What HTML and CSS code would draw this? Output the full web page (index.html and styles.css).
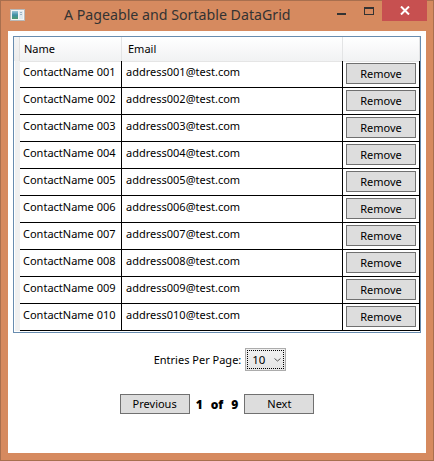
FILE: index.html
```html
<!DOCTYPE html>
<html>
<head>
<meta charset="utf-8">
<link rel="stylesheet" href="styles.css">
</head>
<body>
<div class="window">
  <div class="titlebar">
    <svg class="app-icon" width="15" height="12" viewBox="0 0 15 12">
      <defs>
        <linearGradient id="g" x1="0" y1="0" x2="0" y2="1">
          <stop offset="0" stop-color="#9fc7d8"/>
          <stop offset="0.5" stop-color="#3f8fa6"/>
          <stop offset="1" stop-color="#4f9a6a"/>
        </linearGradient>
      </defs>
      <rect x="0.5" y="0.5" width="14" height="11" fill="#f4f4f4" stroke="#b9b9b9"/>
      <rect x="2" y="2" width="6" height="8" fill="url(#g)"/>
      <rect x="9" y="2" width="4" height="8" fill="#dfe8ee"/>
      <rect x="10" y="3" width="2" height="1" fill="#9db4c4"/>
      <rect x="10" y="5" width="2" height="1" fill="#9db4c4"/>
    </svg>
    <span class="title">A Pageable and Sortable DataGrid</span>
    <span class="spacer"></span>
    <span class="cap-min"></span>
    <span class="cap-max"></span>
    <span class="cap-close">
      <svg width="10" height="9" viewBox="0 0 10 9"><path d="M1 0.5 L9 8.5 M9 0.5 L1 8.5" stroke="#fff" stroke-width="2"/></svg>
    </span>
  </div>
  <div class="client">
    <div class="datagrid">
      <div class="row header">
        <div class="rh"></div>
        <div class="hcell">Name</div>
        <div class="hcell email">Email</div>
        <div class="hcell last"></div>
      </div>
      <div class="row"><div class="rh"></div><div class="cell name">ContactName 001</div><div class="cell email">address001@test.com</div><div class="cell act"><button class="btn remove">Remove</button></div></div>
      <div class="row"><div class="rh"></div><div class="cell name">ContactName 002</div><div class="cell email">address002@test.com</div><div class="cell act"><button class="btn remove">Remove</button></div></div>
      <div class="row"><div class="rh"></div><div class="cell name">ContactName 003</div><div class="cell email">address003@test.com</div><div class="cell act"><button class="btn remove">Remove</button></div></div>
      <div class="row"><div class="rh"></div><div class="cell name">ContactName 004</div><div class="cell email">address004@test.com</div><div class="cell act"><button class="btn remove">Remove</button></div></div>
      <div class="row"><div class="rh"></div><div class="cell name">ContactName 005</div><div class="cell email">address005@test.com</div><div class="cell act"><button class="btn remove">Remove</button></div></div>
      <div class="row"><div class="rh"></div><div class="cell name">ContactName 006</div><div class="cell email">address006@test.com</div><div class="cell act"><button class="btn remove">Remove</button></div></div>
      <div class="row"><div class="rh"></div><div class="cell name">ContactName 007</div><div class="cell email">address007@test.com</div><div class="cell act"><button class="btn remove">Remove</button></div></div>
      <div class="row"><div class="rh"></div><div class="cell name">ContactName 008</div><div class="cell email">address008@test.com</div><div class="cell act"><button class="btn remove">Remove</button></div></div>
      <div class="row"><div class="rh"></div><div class="cell name">ContactName 009</div><div class="cell email">address009@test.com</div><div class="cell act"><button class="btn remove">Remove</button></div></div>
      <div class="row"><div class="rh"></div><div class="cell name">ContactName 010</div><div class="cell email">address010@test.com</div><div class="cell act"><button class="btn remove">Remove</button></div></div>
    </div>
    <div class="entries">
      <span class="entries-label">Entries Per Page:</span>
      <span class="combo">
        <span class="combo-focus">
          <span class="combo-value">10</span>
          <svg class="chev" width="7" height="4" viewBox="0 0 7 4"><path d="M0.5 0.5 L3.5 3 L6.5 0.5" fill="none" stroke="#555" stroke-width="1"/></svg>
        </span>
      </span>
    </div>
    <div class="pager">
      <button class="btn nav">Previous</button>
      <span class="pageinfo"><b>1</b><b>of</b><b>9</b></span>
      <button class="btn nav">Next</button>
    </div>
  </div>
</div>
</body>
</html>
```

FILE: styles.css
```css
html, body {
  margin: 0;
  padding: 0;
}
body {
  background: #d68a5f;
  font-family: "Noto Sans", "Open Sans", sans-serif;
  font-size: 11px;
  color: #000;
}
.window {
  width: 434px;
  height: 461px;
  box-sizing: border-box;
  border: 1px solid #a86f4e;
  padding: 0 7px 7px;
  display: flex;
  flex-direction: column;
  background: #d68a5f;
}
.titlebar {
  height: 30px;
  flex-shrink: 0;
  display: flex;
  align-items: flex-start;
}
.app-icon {
  margin: 8px 0 0 2px;
  flex-shrink: 0;
}
.title {
  margin: 4px 0 0 39px;
  font-size: 14.2px;
  line-height: 20px;
  color: #333;
  white-space: nowrap;
}
.spacer {
  flex: 1;
}
.cap-min {
  width: 9px;
  height: 2px;
  margin-top: 12px;
  background: #333;
}
.cap-max {
  width: 10px;
  height: 8px;
  box-sizing: border-box;
  margin: 6px 0 0 18px;
  border: 1px solid #333;
  border-top-width: 2px;
}
.cap-close {
  width: 45px;
  height: 21px;
  margin: -1px -1px 0 8px;
  background: #c75050;
  display: flex;
  align-items: center;
  justify-content: center;
}
.client {
  flex: 1;
  background: #fff;
  display: flex;
  flex-direction: column;
  align-items: center;
}
.datagrid {
  align-self: stretch;
  margin: 5px 5px 0;
  border: 1px solid #688caf;
  padding-bottom: 1px;
  background: #fff;
}
.row {
  display: grid;
  grid-template-columns: 6px 102px 221px 77px;
  height: 27px;
}
.row.header {
  height: 24px;
  background: linear-gradient(#ffffff, #f1f2f3);
}
.rh {
  background: linear-gradient(to right, #ffffff 0, #ffffff 1px, #f0f0f0 1px);
}
.header .rh {
  background: linear-gradient(#f4f4f4, #ececec);
  border-right: 1px solid #e0e0e0;
}
.hcell {
  box-sizing: border-box;
  border-right: 1px solid #e3e4e5;
  border-bottom: 1px solid #e5e5e5;
  padding-left: 4px;
  line-height: 24px;
  color: #000;
}
.hcell.email {
  padding-left: 6px;
}
.cell {
  box-sizing: border-box;
  border-right: 1px solid #000;
  border-bottom: 1px solid #000;
  padding: 3px 0 0 3px;
  line-height: 16px;
  white-space: nowrap;
  overflow: hidden;
}
.cell.email {
  padding-left: 4px;
}
.cell.act {
  padding: 2px 0 0 3px;
}
.btn {
  font-family: inherit;
  font-size: 11px;
  color: #000;
  background: #dddddd;
  border: 1px solid #707070;
  border-radius: 0;
  padding: 0;
  margin: 0;
  box-sizing: border-box;
}
.remove {
  width: 70px;
  height: 21px;
  line-height: 19px;
}
.entries {
  margin-top: 15px;
  display: flex;
  align-items: center;
  margin-left: 6px;
}
.entries-label {
  margin-right: 4px;
}
.combo {
  width: 41px;
  height: 23px;
  box-sizing: border-box;
  border: 1px solid #acacac;
  background: linear-gradient(#f0f0f0, #e5e5e5);
  padding: 1px;
  display: flex;
}
.combo-focus {
  flex: 1;
  border: 1px dotted #000;
  display: flex;
  align-items: center;
  padding-left: 4px;
}
.combo-value {
  font-size: 11.5px;
}
.chev {
  margin-left: 9px;
}
.pager {
  margin-top: 23px;
  display: flex;
  align-items: center;
  gap: 6px;
}
.nav {
  width: 70px;
  height: 20px;
  line-height: 18px;
}
.pageinfo {
  display: flex;
  gap: 8px;
  font-weight: bold;
  font-size: 12px;
}
```
